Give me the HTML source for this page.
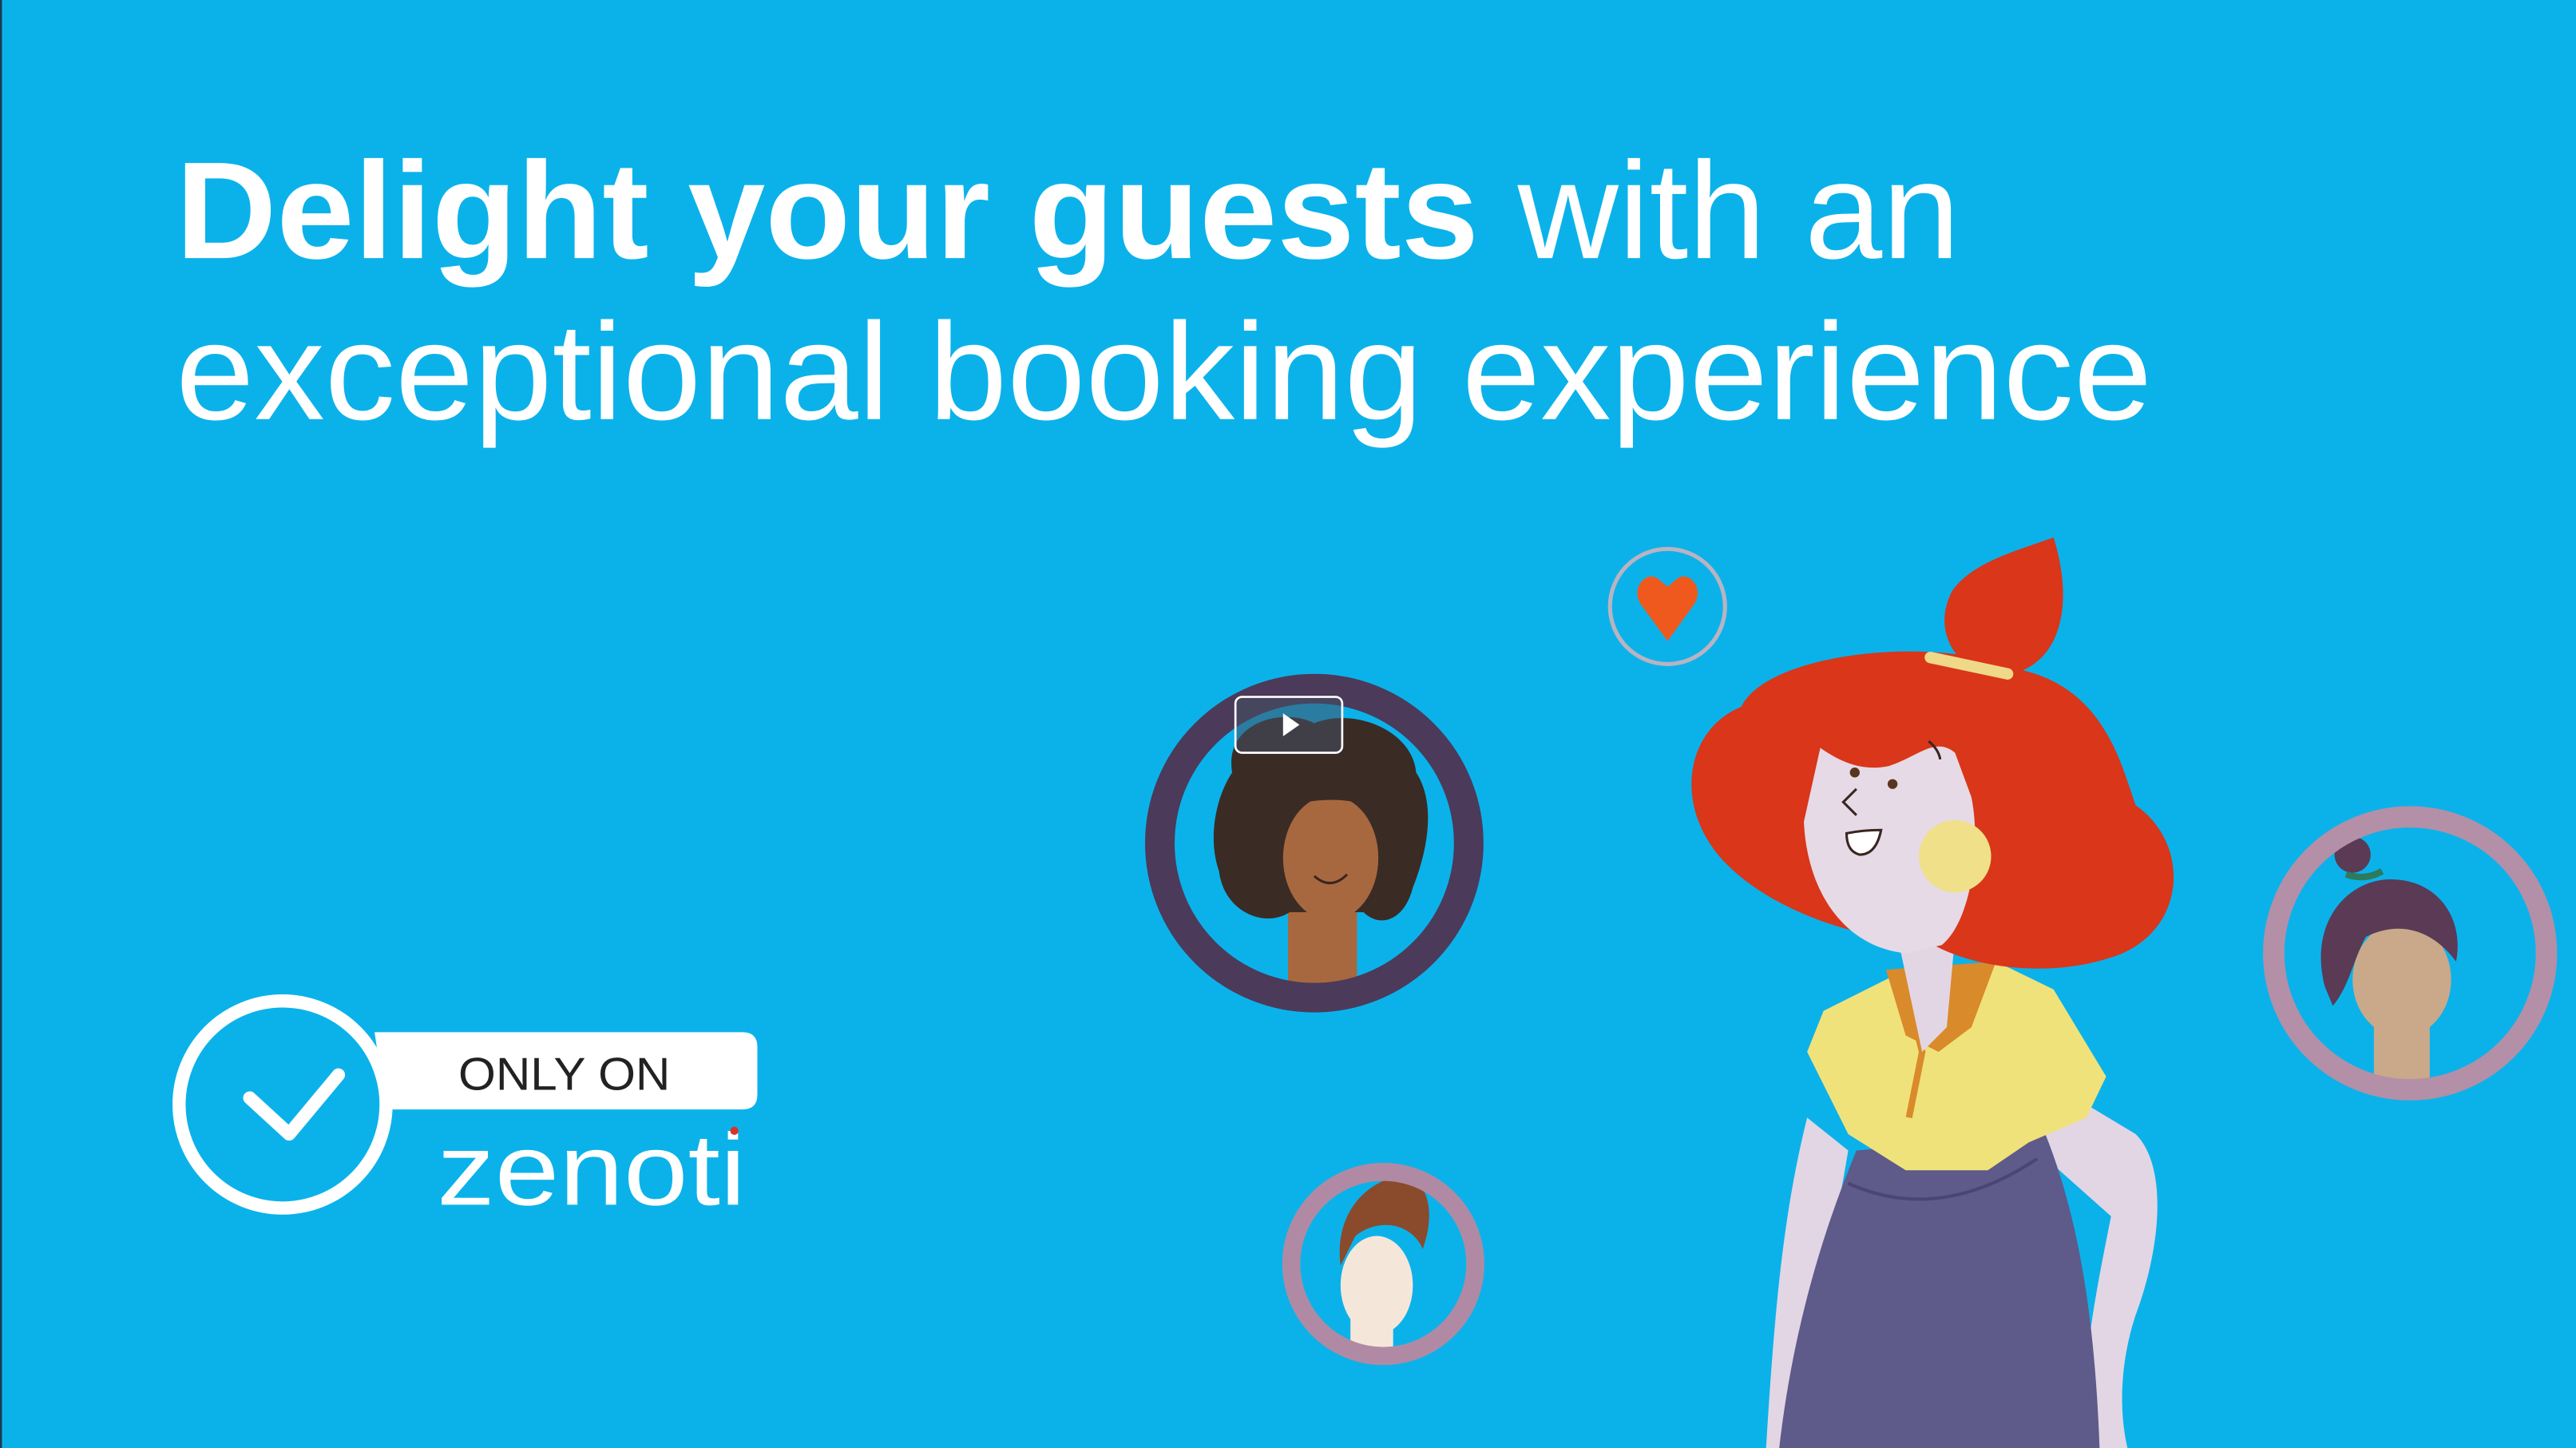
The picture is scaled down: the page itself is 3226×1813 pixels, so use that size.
<!DOCTYPE html>
<html><head><meta charset="utf-8"><style>
html,body{margin:0;padding:0;background:#0bb2ea;overflow:hidden}
svg{display:block}
</style></head><body>
<svg width="3226" height="1813" viewBox="0 0 1568 881" preserveAspectRatio="none" xmlns="http://www.w3.org/2000/svg">
<defs>
<clipPath id="c1"><circle cx="800" cy="513" r="86"/></clipPath>
<clipPath id="c2"><circle cx="1467" cy="580" r="77"/></clipPath>
<clipPath id="c3"><circle cx="842" cy="769" r="51"/></clipPath>
</defs>
<rect width="1568" height="881" fill="#0bb2ea"/>
<rect x="0" y="0" width="1.2" height="881" fill="#1a3a50"/>
<text x="107" y="157" font-family="Liberation Sans, sans-serif" font-size="84" fill="#fff" textLength="1086" lengthAdjust="spacingAndGlyphs"><tspan font-weight="bold">Delight your guests</tspan> with an</text>
<text x="107" y="255" font-family="Liberation Sans, sans-serif" font-size="84" fill="#fff" textLength="1203" lengthAdjust="spacingAndGlyphs">exceptional booking experience</text>

<!-- badge -->
<path d="M228,628 H452 Q461,628 461,637 V666 Q461,675 452,675 H235 Z" fill="#fff"/>
<circle cx="172" cy="672" r="63" fill="#0bb2ea" stroke="#fff" stroke-width="8"/>
<path d="M152,668 L176,690 L206,654" fill="none" stroke="#fff" stroke-width="8" stroke-linecap="round" stroke-linejoin="round"/>
<text x="279" y="663" font-family="Liberation Sans, sans-serif" font-size="28" fill="#222" textLength="129" lengthAdjust="spacingAndGlyphs">ONLY ON</text>
<text x="266" y="733" font-family="Liberation Sans, sans-serif" font-size="62" fill="#fff" textLength="188" lengthAdjust="spacingAndGlyphs">zenoti</text>
<circle cx="447" cy="688" r="2.5" fill="#d9332a"/>

<!-- heart -->
<circle cx="1015" cy="369" r="35" fill="none" stroke="#b9b3c2" stroke-width="2.5"/>
<path d="M1015,390 L999,368 C992,358 1002,347 1009,352 L1015,357 L1021,352 C1028,347 1038,358 1031,368 Z" fill="#f0591d"/>

<!-- avatar 1 -->
<g clip-path="url(#c1)">
<rect x="784" y="540" width="42" height="80" fill="#a8683f"/>
<path d="M750,470 C745,440 780,430 800,440 C825,430 860,445 862,470 C875,490 868,520 860,540 C855,560 840,565 830,555 L785,555 C770,565 745,555 742,530 C735,510 740,485 750,470Z" fill="#3b2b25"/>
<ellipse cx="810" cy="522" rx="29" ry="38" fill="#a8683f"/>
<path d="M782,492 C795,480 825,480 840,495 C830,485 800,484 782,492Z" fill="#3b2b25"/>
<path d="M800,533 Q810,542 820,532" fill="none" stroke="#3a2520" stroke-width="1.5"/>
</g>
<circle cx="800" cy="513" r="94" fill="none" stroke="#4b3a5a" stroke-width="18"/>
<rect x="752" y="424" width="65" height="34" rx="4" fill="rgba(70,80,100,0.55)" stroke="#fff" stroke-width="1.3"/>
<path d="M781,434 L791,441 L781,448 Z" fill="#fff"/>

<!-- avatar 2 -->
<g clip-path="url(#c2)">
<rect x="1445" y="600" width="34" height="70" fill="#c9a98a"/>
<ellipse cx="1462" cy="596" rx="30" ry="35" fill="#c9a98a"/>
<path d="M1415,600 C1405,560 1430,535 1455,535 C1485,535 1500,560 1495,585 C1480,565 1460,560 1440,570 C1432,585 1430,600 1420,612Z" fill="#5a3a55"/>
<circle cx="1432" cy="520" r="11" fill="#5a3a55"/>
<path d="M1428,532 Q1440,536 1450,530" stroke="#2e7a5e" stroke-width="4" fill="none"/>
</g>
<circle cx="1467" cy="580" r="83" fill="none" stroke="#b48fa8" stroke-width="13"/>

<!-- avatar 3 -->
<g clip-path="url(#c3)">
<rect x="822" y="790" width="26" height="40" fill="#f5e6da"/>
<ellipse cx="838" cy="782" rx="22" ry="30" fill="#f5e6da"/>
<path d="M816,770 C812,740 830,720 850,716 C868,714 875,735 866,760 C860,745 840,740 825,752 Z" fill="#8a4a2c"/>
</g>
<circle cx="842" cy="769" r="56" fill="none" stroke="#b08aa4" stroke-width="11"/>

<!-- woman -->
<path d="M1100,680 C1085,740 1080,800 1075,881 L1095,881 C1100,820 1115,760 1125,700Z" fill="#e2d6e4"/>
<path d="M1250,660 L1300,690 C1320,710 1315,760 1300,800 C1290,830 1290,860 1295,881 L1270,881 C1265,840 1275,790 1285,740 L1240,700Z" fill="#e2d6e4"/>
<path d="M1130,700 L1245,690 C1265,740 1275,800 1278,881 L1083,881 C1090,820 1105,760 1130,700Z" fill="#5e5a8a"/>
<path d="M1125,720 Q1180,745 1240,705" fill="none" stroke="#4a4575" stroke-width="2"/>
<path d="M1110,615 L1160,590 L1215,585 L1250,602 L1282,655 L1270,680 L1235,695 L1210,712 L1160,712 L1125,690 L1100,640 Z" fill="#f0e27a"/>
<path d="M1148,590 L1160,630 L1180,640 L1200,625 L1215,585 Z" fill="#d98a2a"/>
<path d="M1160,600 L1170,640 L1162,680" fill="none" stroke="#d98a2a" stroke-width="4"/>
<path d="M1155,570 L1190,570 L1185,625 L1170,640 Z" fill="#e2d6e4"/>
<path d="M1250,327 C1262,365 1256,402 1225,410 C1192,414 1175,385 1188,360 C1200,342 1228,335 1250,327Z" fill="#d9361a"/>
<path d="M1060,430 C1075,398 1175,385 1232,408 C1282,420 1292,468 1300,490 C1332,512 1332,562 1292,580 C1252,596 1200,590 1172,572 C1120,572 1060,545 1040,512 C1020,480 1030,442 1060,430Z" fill="#d9361a"/>
<path d="M1108,455 C1118,462 1132,470 1150,466 C1168,460 1178,448 1190,458 L1200,485 C1206,515 1200,560 1182,575 L1160,580 C1122,576 1100,542 1098,500 Z" fill="#e6dae6"/>
<circle cx="1190" cy="521" r="22" fill="#f0e08a"/>
<path d="M1174,451 Q1180,456 1181,462" stroke="#3a2520" stroke-width="1.5" fill="none"/>
<circle cx="1129" cy="470" r="3" fill="#5a3520"/>
<circle cx="1152" cy="477" r="3" fill="#5a3520"/>
<path d="M1130,480 L1122,488 L1130,496" stroke="#3a2520" stroke-width="1.5" fill="none"/>
<path d="M1124,507 Q1134,505 1145,505 Q1142,520 1132,520 Q1124,518 1124,507Z" fill="#fff" stroke="#3a2520" stroke-width="1.5"/>
<path d="M1175,400 L1222,410" stroke="#f0d889" stroke-width="7" stroke-linecap="round"/>
</svg>
</body></html>
